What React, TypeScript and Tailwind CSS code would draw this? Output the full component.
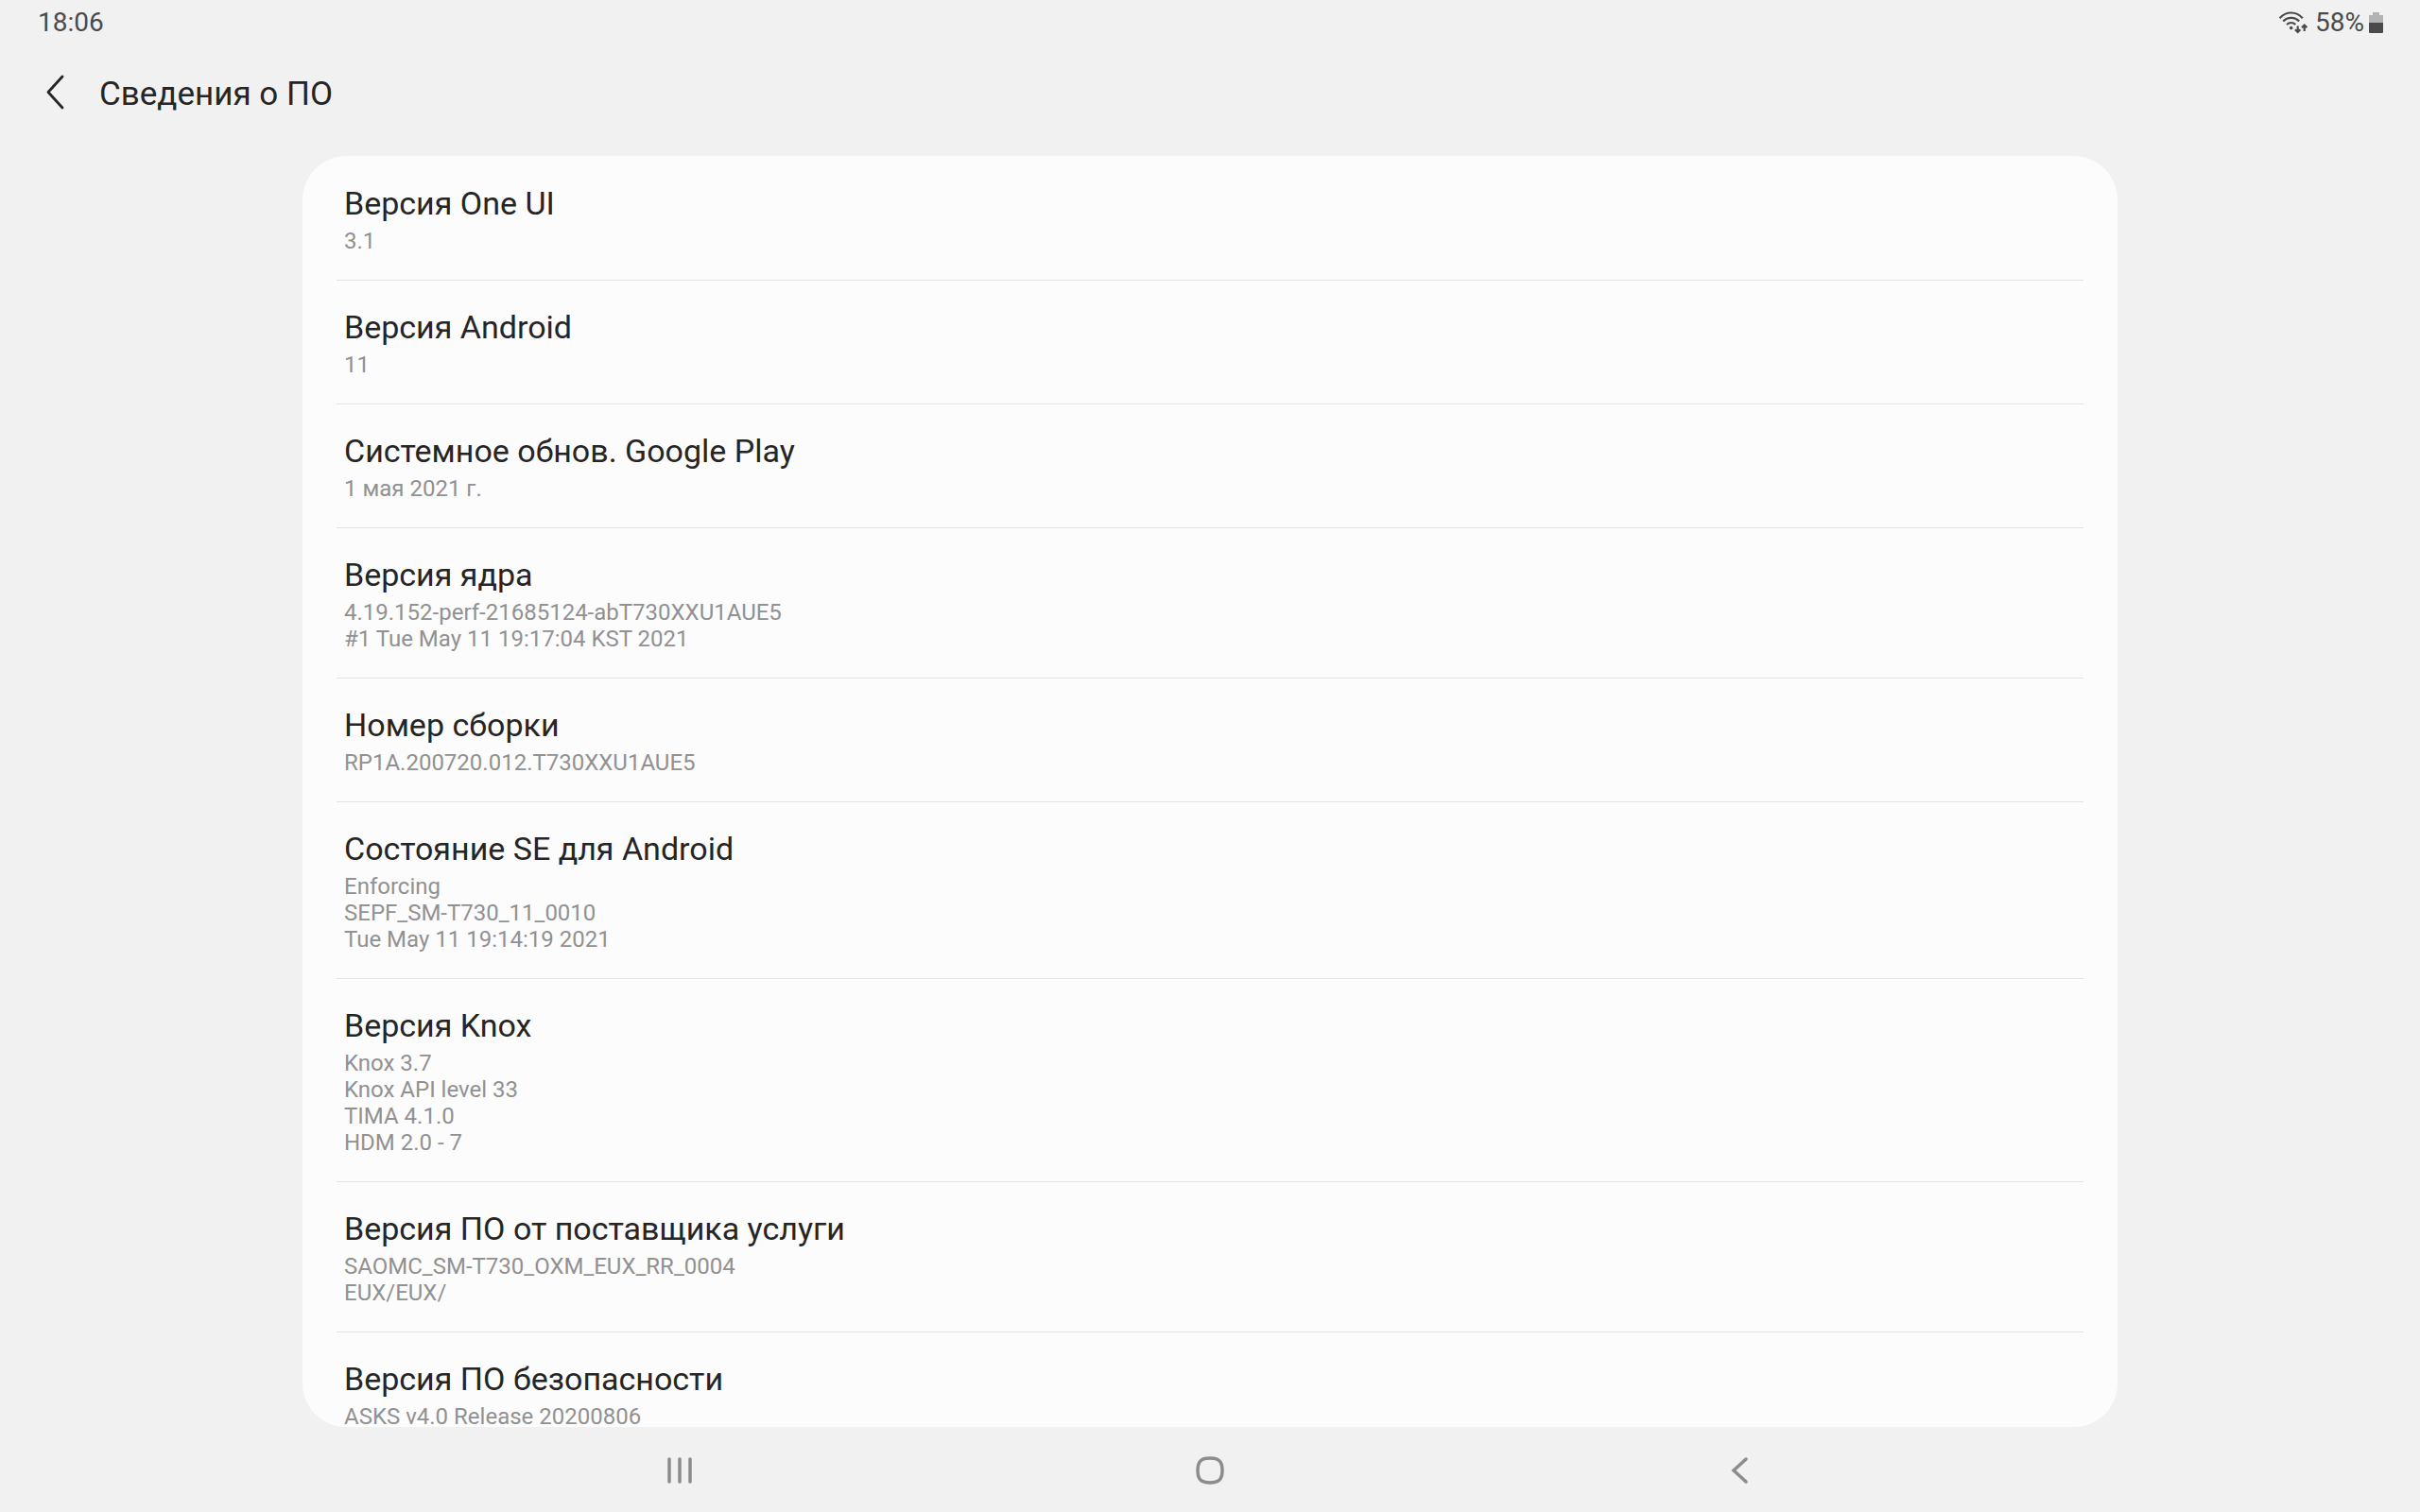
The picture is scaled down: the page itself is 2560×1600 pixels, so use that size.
type InfoItem = {
  title: string;
  lines: string[];
};

const items: InfoItem[] = [
  { title: 'Версия One UI', lines: ['3.1'] },
  { title: 'Версия Android', lines: ['11'] },
  { title: 'Системное обнов. Google Play', lines: ['1 мая 2021 г.'] },
  {
    title: 'Версия ядра',
    lines: ['4.19.152-perf-21685124-abT730XXU1AUE5', '#1 Tue May 11 19:17:04 KST 2021'],
  },
  { title: 'Номер сборки', lines: ['RP1A.200720.012.T730XXU1AUE5'] },
  {
    title: 'Состояние SE для Android',
    lines: ['Enforcing', 'SEPF_SM-T730_11_0010', 'Tue May 11 19:14:19 2021'],
  },
  {
    title: 'Версия Knox',
    lines: ['Knox 3.7', 'Knox API level 33', 'TIMA 4.1.0', 'HDM 2.0 - 7'],
  },
  {
    title: 'Версия ПО от поставщика услуги',
    lines: ['SAOMC_SM-T730_OXM_EUX_RR_0004', 'EUX/EUX/'],
  },
  { title: 'Версия ПО безопасности', lines: ['ASKS v4.0 Release 20200806'] },
];

function WifiIcon() {
  return (
    <svg className="h-6 w-[30px]" viewBox="0 0 30 24" fill="none" stroke="currentColor" strokeWidth="2.2">
      <path d="M.6 7.2C7.4-.4 18-.4 24.8 7.2" />
      <path d="M4.2 10.6c4.8-5 12.2-5 17 0" />
      <path d="M8 14c2.8-2.6 6.6-2.6 9.4 0" />
      <circle cx="12.7" cy="17.6" r="1.8" fill="currentColor" stroke="none" />
      <path d="M19.7 15.5v6M17 19.3l2.7 2.7 2.7-2.7" />
      <path d="M26.7 21v-6M24 17.2l2.7-2.7 2.7 2.7" />
    </svg>
  );
}

function BatteryIcon() {
  return (
    <svg className="h-6 w-4" viewBox="0 0 16 24">
      <path d="M4 1h7v3h4v9H0V4h4z" fill="#b3b3b3" />
      <path d="M0 12h15v10q0 1-1 1H1q-1 0-1-1z" fill="#4a4a4a" />
    </svg>
  );
}

function StatusBar() {
  return (
    <div className="flex h-12 shrink-0 items-center justify-between pr-[38px] pl-10 text-[28px] leading-8 text-[#4a4a4a]">
      <time>18:06</time>
      <div className="flex items-center">
        <WifiIcon />
        <span className="mr-[5px] ml-2">58%</span>
        <BatteryIcon />
      </div>
    </div>
  );
}

function InfoRow({ item }: { item: InfoItem }) {
  return (
    <li className="border-b border-[#e3e3e3] px-2 pt-[29px] pb-[27px] last:border-b-0">
      <h2 className="text-[34px] leading-10 text-[#252525]">{item.title}</h2>
      <div className="mt-1.5 text-[24px] leading-7 text-[#919191]">
        {item.lines.map((line) => (
          <p key={line}>{line}</p>
        ))}
      </div>
    </li>
  );
}

function NavBar() {
  return (
    <nav className="mx-auto grid h-[90px] w-[65.8%] shrink-0 grid-cols-3 pt-0.5 text-[#8c8c8c]">
      <button className="flex items-center justify-center" type="button" aria-label="Недавние">
        <svg className="size-8" viewBox="0 0 32 32" fill="none" stroke="currentColor" strokeWidth="3.5" strokeLinecap="round">
          <path d="M5 4v24M16 4v24M27 4v24" />
        </svg>
      </button>
      <button className="flex items-center justify-center" type="button" aria-label="Главный экран">
        <svg className="size-8" viewBox="0 0 32 32" fill="none" stroke="currentColor" strokeWidth="3.5">
          <path d="M16 3C25.5 3 29 6.5 29 16S25.5 29 16 29 3 25.5 3 16 6.5 3 16 3z" />
        </svg>
      </button>
      <button className="flex items-center justify-center" type="button" aria-label="Назад">
        <svg className="size-8" viewBox="0 0 32 32" fill="none" stroke="currentColor" strokeWidth="3.5" strokeLinecap="round">
          <path d="M22 4L9 16 22 28" />
        </svg>
      </button>
    </nav>
  );
}

export default function App() {
  return (
    <div className="flex h-screen flex-col bg-[#f1f1f1] font-['Roboto',sans-serif]">
      <StatusBar />
      <header className="flex h-[117px] shrink-0 items-start pt-7 pl-10">
        <button className="flex h-11 w-[65px] items-center" type="button" aria-label="Вернуться">
          <svg className="h-10 w-9" viewBox="0 0 36 40" fill="none" stroke="#252525" strokeWidth="2.8" strokeLinecap="round" strokeLinejoin="round">
            <path d="M26 3L11 19.5 26 36" />
          </svg>
        </button>
        <h1 className="text-[35px] leading-12 text-[#252525]">Сведения о ПО</h1>
      </header>
      <main className="mx-auto min-h-0 w-3/4 flex-1 overflow-y-auto rounded-[46px] bg-[#fcfcfc] px-9 [scrollbar-width:none]">
        <ul className="pt-px">
          {items.map((item) => (
            <InfoRow key={item.title} item={item} />
          ))}
        </ul>
      </main>
      <NavBar />
    </div>
  );
}
